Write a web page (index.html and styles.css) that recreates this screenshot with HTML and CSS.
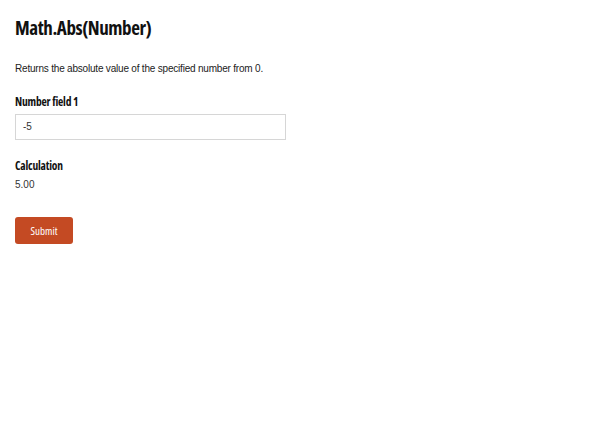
FILE: index.html
```html
<!DOCTYPE html>
<html>
<head>
<meta charset="utf-8">
<link rel="stylesheet" href="styles.css">
</head>
<body>
<div class="page">
  <h1 class="title">Math.Abs(Number)</h1>
  <p class="desc">Returns the absolute value of the specified number from 0.</p>
  <div class="field">
    <label class="label">Number field 1</label>
    <div class="input">-5</div>
  </div>
  <div class="field calc">
    <div class="label">Calculation</div>
    <div class="value">5.00</div>
  </div>
  <button class="submit">Submit</button>
</div>
</body>
</html>
```
FILE: styles.css
```css
html, body { margin: 0; padding: 0; background: #fff; }
.page {
  padding: 15px 15px;
  display: flex;
  flex-direction: column;
  align-items: flex-start;
  font-family: "Liberation Sans", Arial, sans-serif;
  color: #222;
}
.title {
  margin: 1px 0 0;
  font-family: "Open Sans", sans-serif;
  font-stretch: condensed;
  font-weight: 700;
  font-size: 19px;
  line-height: 24px;
  color: #111;
  letter-spacing: -0.4px;
}
.desc {
  margin: 22px 0 0;
  font-size: 10px;
  letter-spacing: -0.2px;
  line-height: 14px;
  color: #222;
}
.field { display: flex; flex-direction: column; margin-top: 18px; }
.label {
  font-family: "Open Sans", sans-serif;
  font-stretch: condensed;
  font-weight: 700;
  font-size: 11.5px;
  line-height: 16px;
  color: #111;
  letter-spacing: -0.2px;
}
.input {
  margin-top: 4px;
  box-sizing: border-box;
  width: 271px;
  height: 26px;
  border: 1px solid #d6d6d6;
  padding: 0 7px;
  font-size: 10px;
  line-height: 24px;
  color: #333;
}
.calc { margin-top: 18px; }
.value {
  margin-top: 4px;
  font-size: 10px;
  line-height: 14px;
  color: #333;
}
.submit {
  margin-top: 25px;
  width: 58px;
  height: 27px;
  border: none;
  border-radius: 3px;
  background: #c44a23;
  color: #fff;
  font-family: "Open Sans", sans-serif;
  font-stretch: condensed;
  font-size: 11px;
  padding: 0;
}
```
